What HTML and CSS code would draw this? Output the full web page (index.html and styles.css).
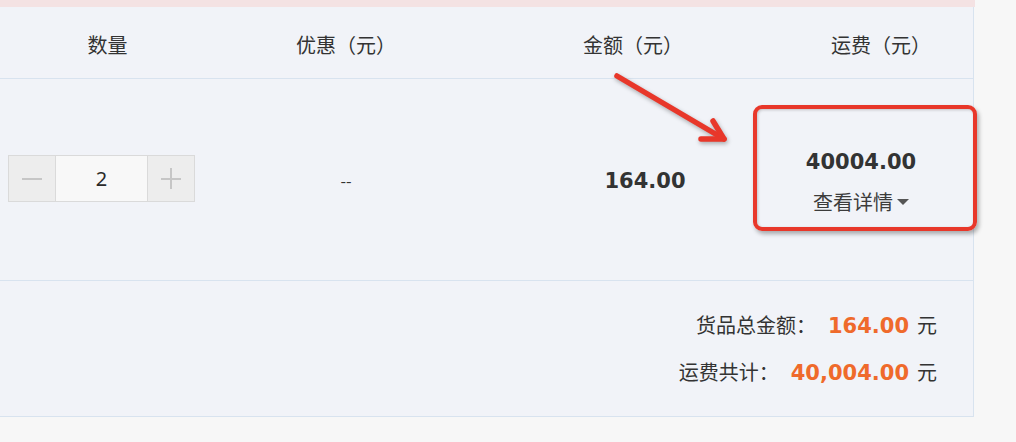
FILE: index.html
```html
<!DOCTYPE html>
<html lang="zh-CN">
<head>
<meta charset="utf-8">
<title>订单</title>
<link rel="stylesheet" href="styles.css">
</head>
<body>
<div class="page">
  <div class="strip"></div>
  <div class="panel">
    <div class="row head">
      <div class="cell">数量</div>
      <div class="cell">优惠（元）</div>
      <div class="cell">金额（元）</div>
      <div class="cell">运费（元）</div>
    </div>
    <div class="row body">
      <div class="cell qty">
        <div class="stepper">
          <span class="btn minus"></span>
          <span class="val">2</span>
          <span class="btn plus"></span>
        </div>
      </div>
      <div class="cell dash">--</div>
      <div class="cell amount">164.00</div>
      <div class="cell freight">
        <div class="num">40004.00</div>
        <div class="detail">查看详情<span class="caret"></span></div>
      </div>
    </div>
    <div class="foot">
      <div class="line"><span class="lbl">货品总金额：</span><span class="money">164.00</span><span class="unit">元</span></div>
      <div class="line"><span class="lbl">运费共计：</span><span class="money">40,004.00</span><span class="unit">元</span></div>
    </div>
  </div>
  <div class="highlight"></div>
  <svg class="arrow" width="130" height="90" viewBox="0 0 130 90">
    <g fill="none" stroke="#e8372a" stroke-width="5.5" stroke-linecap="round" stroke-linejoin="round">
      <path d="M15 14 L122 77"/>
      <path d="M111 59 L122 77 L99 77"/>
    </g>
  </svg>
</div>
</body>
</html>
```

FILE: styles.css
```css
html, body {
  margin: 0;
  padding: 0;
  background: #f7f7f7;
}
body {
  font-family: "Microsoft YaHei", "Noto Sans CJK SC", "Noto Sans", sans-serif;
  color: #2b2b2b;
  width: 1016px;
  height: 442px;
  overflow: hidden;
}
.page {
  position: relative;
  width: 1016px;
  height: 442px;
}
.strip {
  width: 975px;
  height: 7px;
  background: #f4e2e3;
}
.panel {
  width: 973px;
  background: #f1f3f8;
  border-right: 1px solid #d8e3ef;
  border-bottom: 1px solid #d8e3ef;
}
.row {
  display: grid;
  grid-template-columns: 215px 262px 312px 1fr;
  border-bottom: 1px solid #d8e3ef;
}
.cell {
  display: flex;
  align-items: center;
  justify-content: center;
}
.head {
  height: 71px;
  font-size: 20px;
  color: #333;
}
.head .cell {
  padding-top: 4px;
}
.body {
  height: 201px;
}
.qty {
  justify-content: flex-start;
  padding-left: 8px;
  padding-bottom: 3px;
}
.stepper {
  display: flex;
  height: 45px;
  border: 1px solid #dadada;
}
.btn {
  width: 46px;
  background: #ededed;
  position: relative;
}
.minus::before, .plus::before, .plus::after {
  content: "";
  position: absolute;
  background: #c6c6c6;
}
.minus::before, .plus::before {
  left: 13px;
  top: 22px;
  width: 20px;
  height: 2px;
}
.plus::after {
  left: 22px;
  top: 12px;
  width: 2px;
  height: 21px;
}
.val {
  width: 91px;
  border-left: 1px solid #dadada;
  border-right: 1px solid #dadada;
  background: #f8f8f8;
  display: flex;
  align-items: center;
  justify-content: center;
  font-family: "Microsoft YaHei", "Noto Sans", sans-serif;
  font-size: 20px;
  color: #2a2a2a;
}
.dash {
  font-size: 16px;
  color: #333;
}
.amount {
  font-family: "DejaVu Sans", Verdana, sans-serif;
  font-weight: bold;
  font-size: 21px;
  color: #333;
  padding-left: 24px;
  padding-top: 2px;
}
.freight {
  flex-direction: column;
  padding-right: 40px;
  padding-top: 4px;
}
.num {
  font-family: "DejaVu Sans", Verdana, sans-serif;
  font-weight: bold;
  font-size: 21px;
  color: #333;
  line-height: 28px;
}
.detail {
  font-size: 20px;
  color: #3c3c3c;
  line-height: 28px;
  margin-top: 12px;
  display: flex;
  align-items: center;
}
.caret {
  width: 0;
  height: 0;
  margin-left: 4px;
  border-left: 6px solid transparent;
  border-right: 6px solid transparent;
  border-top: 6px solid #555;
}
.foot {
  height: 135px;
  display: flex;
  flex-direction: column;
  align-items: flex-end;
  justify-content: center;
  padding-right: 36px;
  gap: 18px;
}
.line {
  display: flex;
  align-items: baseline;
  line-height: 28px;
}
.lbl {
  font-size: 20px;
  color: #333;
  margin-right: 12px;
}
.money {
  font-family: "DejaVu Sans", Verdana, sans-serif;
  font-weight: bold;
  font-size: 21px;
  color: #ef6a2b;
}
.unit {
  font-size: 20px;
  color: #333;
  margin-left: 8px;
}
.highlight {
  position: absolute;
  left: 753px;
  top: 105px;
  width: 216px;
  height: 118px;
  border: 4px solid #e8372a;
  border-radius: 9px;
  box-shadow: 2px 3px 4px rgba(0, 0, 0, 0.3), inset 1px 1px 3px rgba(0, 0, 0, 0.2);
}
.arrow {
  position: absolute;
  left: 602px;
  top: 62px;
  filter: drop-shadow(1px 2px 2px rgba(0, 0, 0, 0.3));
}
```
